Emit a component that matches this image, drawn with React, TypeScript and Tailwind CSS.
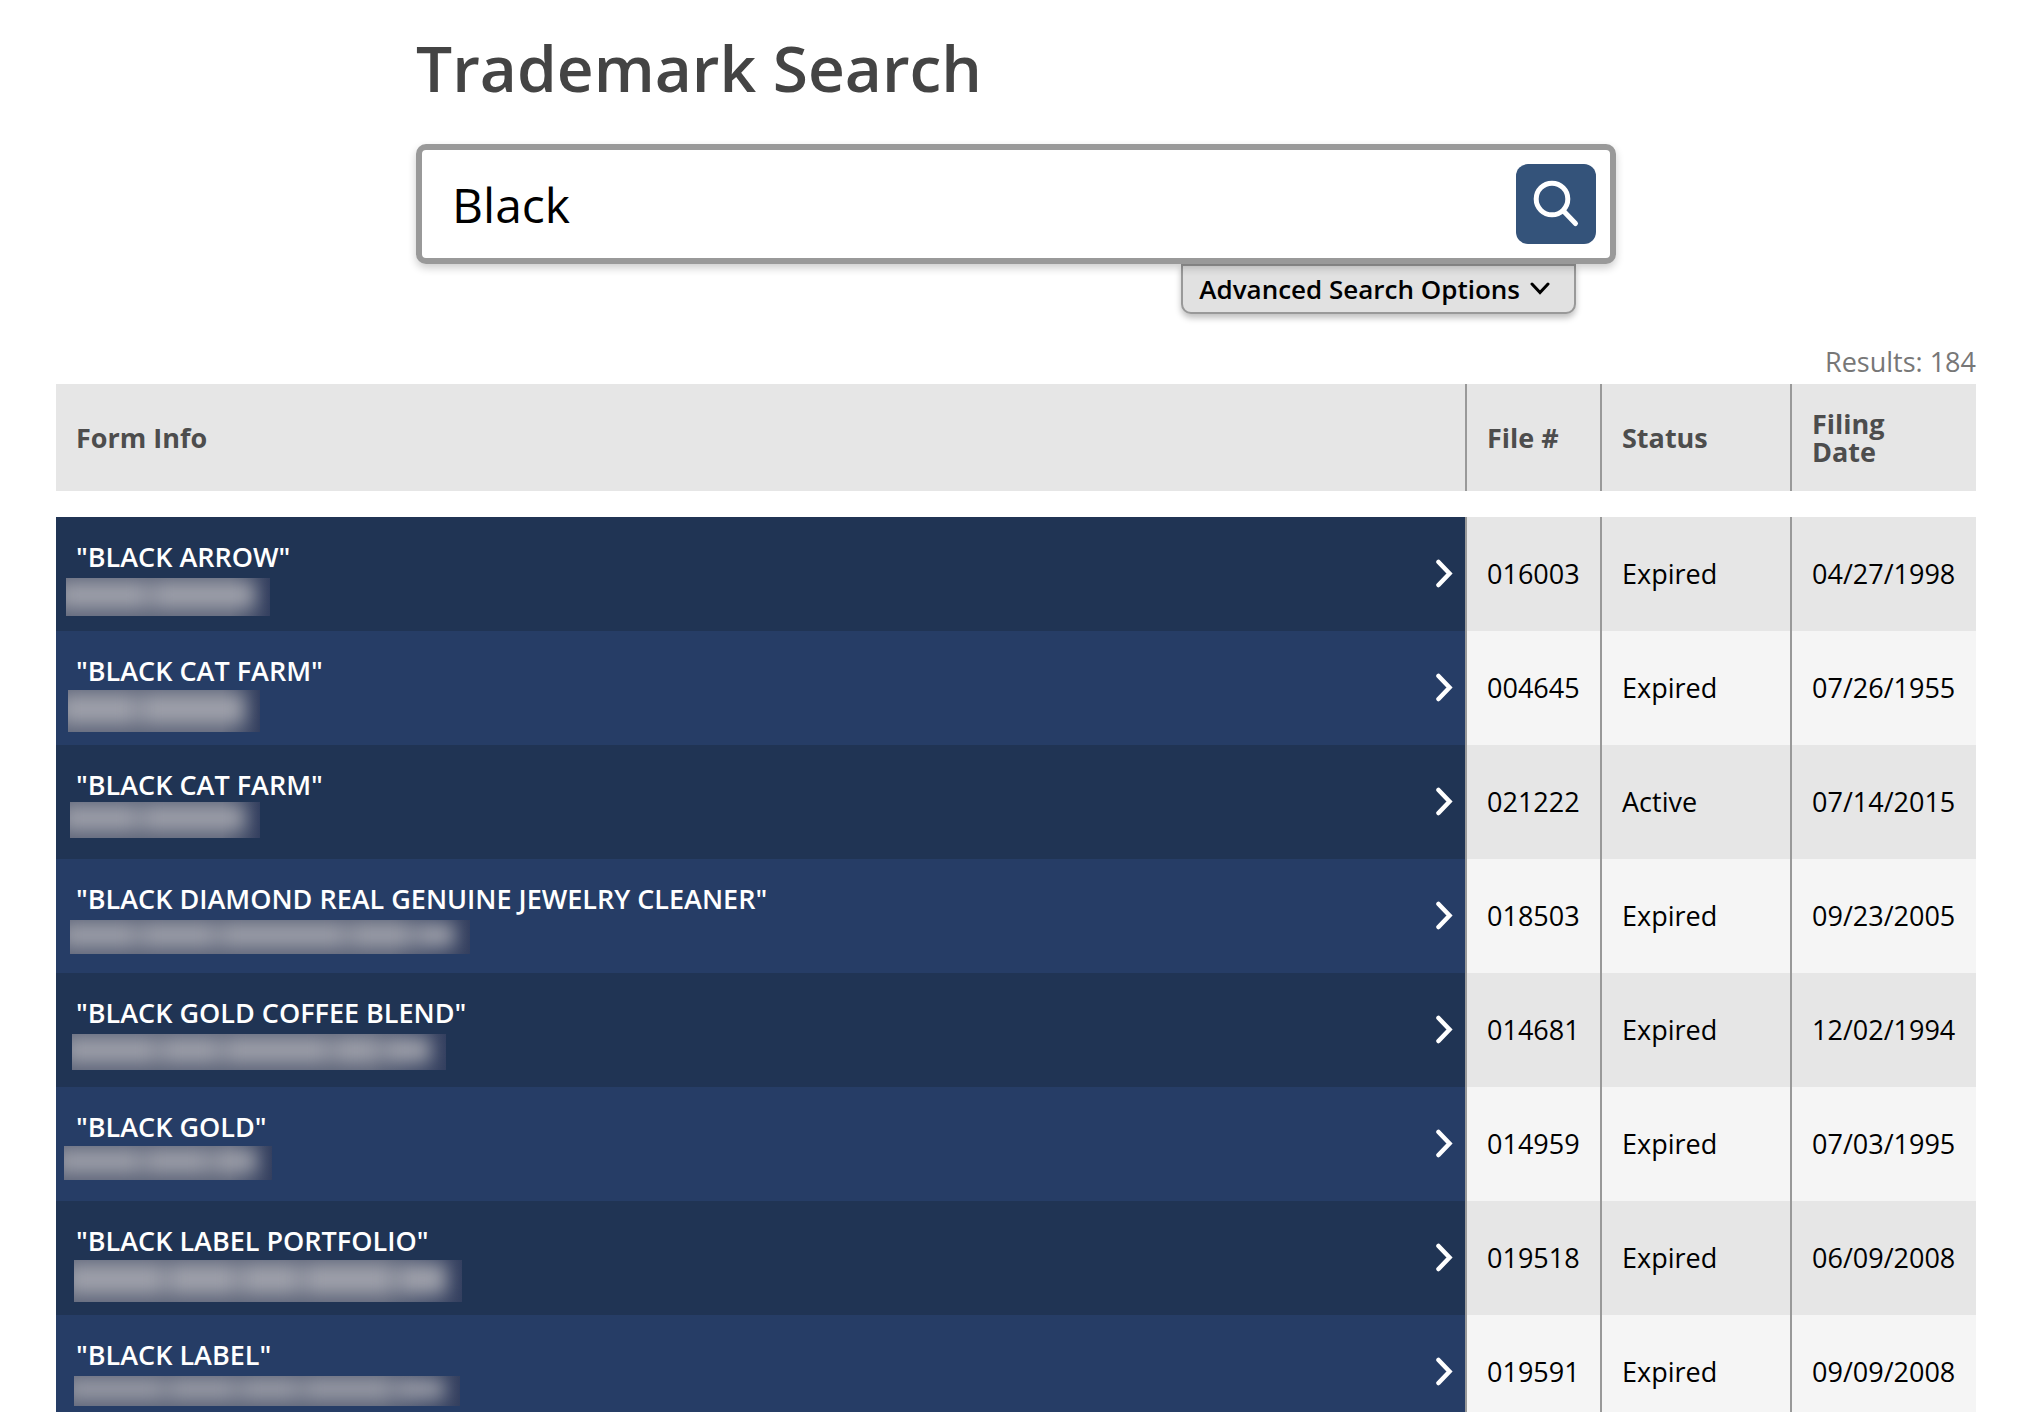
type Trademark = {
  name: string;
  file: string;
  status: string;
  date: string;
  // placement of the blurred owner line inside the cell
  mask: string;
  // relative widths of the blurred words
  words: number[];
};

const trademarks: Trademark[] = [
  { name: "BLACK ARROW", file: "016003", status: "Expired", date: "04/27/1998", mask: "left-[10px] top-[61px] w-[204px] h-[38px]", words: [8, 9] },
  { name: "BLACK CAT FARM", file: "004645", status: "Expired", date: "07/26/1955", mask: "left-[12px] top-[59px] w-[192px] h-[42px]", words: [6, 8] },
  { name: "BLACK CAT FARM", file: "021222", status: "Active", date: "07/14/2015", mask: "left-[14px] top-[57px] w-[190px] h-[36px]", words: [6, 8] },
  { name: "BLACK DIAMOND REAL GENUINE JEWELRY CLEANER", file: "018503", status: "Expired", date: "09/23/2005", mask: "left-[14px] top-[61px] w-[400px] h-[34px]", words: [6, 6, 10, 5, 3] },
  { name: "BLACK GOLD COFFEE BLEND", file: "014681", status: "Expired", date: "12/02/1994", mask: "left-[16px] top-[61px] w-[374px] h-[36px]", words: [8, 5, 9, 4, 4] },
  { name: "BLACK GOLD", file: "014959", status: "Expired", date: "07/03/1995", mask: "left-[8px] top-[59px] w-[208px] h-[34px]", words: [8, 6, 4] },
  { name: "BLACK LABEL PORTFOLIO", file: "019518", status: "Expired", date: "06/09/2008", mask: "left-[18px] top-[59px] w-[388px] h-[42px]", words: [10, 7, 6, 9, 5] },
  { name: "BLACK LABEL", file: "019591", status: "Expired", date: "09/09/2008", mask: "left-[18px] top-[61px] w-[386px] h-[30px]", words: [10, 7, 6, 9, 5] },
];

function SearchIcon() {
  return (
    <svg viewBox="0 0 80 80" className="size-full" fill="none" stroke="white" strokeWidth="5" strokeLinecap="round" aria-hidden="true">
      <circle cx="36" cy="35" r="15.8" />
      <path d="M48 47.5 59.5 59.5" />
    </svg>
  );
}

function OwnerMask({ mask, words }: { mask: string; words: number[] }) {
  return (
    <div className={`absolute overflow-hidden bg-linear-to-r from-[#5f667a] from-80% to-[#333f5f] ${mask}`} aria-hidden="true">
      <div className="-ml-2 flex h-full gap-1 pr-4 pt-1 pb-2 blur-[9px]">
        {words.map((size, i) => (
          <span key={i} className="bg-[#9fa1ab]" style={{ flexGrow: size }} />
        ))}
      </div>
    </div>
  );
}

function Row({ item }: { item: Trademark }) {
  return (
    <tr className="group bg-[#e6e6e6] even:bg-[#f5f5f5]">
      <td className="bg-[#203454] p-0 group-even:bg-[#263d66]">
        <a href="#" className="relative flex h-[114px] items-center justify-between pl-5 pr-3 text-white">
          <span className="pb-[34px] font-semibold leading-9">"{item.name}"</span>
          <OwnerMask mask={item.mask} words={item.words} />
          <svg viewBox="0 0 18 30" className="h-[30px] w-[18px]" fill="none" stroke="currentColor" strokeWidth="4.5" strokeLinecap="round" aria-hidden="true">
            <path d="M3.5 3 14.5 14.5 3.5 26" />
          </svg>
        </a>
      </td>
      <td className="border-l-2 border-[#999] px-5">{item.file}</td>
      <td className="border-l-2 border-[#999] px-5">{item.status}</td>
      <td className="border-l-2 border-[#999] px-5">{item.date}</td>
    </tr>
  );
}

export default function App() {
  return (
    <main className="bg-white px-12 pl-14 font-['Open_Sans','Noto_Sans',sans-serif] text-[27px] text-black">
      <div className="mx-auto flex max-w-[1200px] flex-col">
        <h1 className="pt-[22px] text-[64px] font-semibold leading-[92px] text-[#444]">Trademark Search</h1>
        <form className="mt-[30px] flex flex-col" onSubmit={(e) => e.preventDefault()}>
          <div className="relative z-10 flex h-[120px] items-center rounded-[10px] border-6 border-[#999] bg-white pl-[30px] pr-[14px] shadow-[0_4px_8px_rgba(0,0,0,0.2)]">
            <input aria-label="Search trademarks" defaultValue="Black" className="min-w-0 flex-1 pt-0.5 text-[48px] outline-none" />
            <button type="submit" aria-label="Search" className="size-20 rounded-xl bg-[#34537a]">
              <SearchIcon />
            </button>
          </div>
          <button type="button" className="mr-10 flex h-[50px] items-center gap-[10px] self-end rounded-b-[10px] border-2 border-[#999] bg-[#e1e1e1] pl-4 pr-6 text-[26px] font-semibold shadow-[0_4px_6px_rgba(0,0,0,0.25)]">
            Advanced Search Options
            <svg viewBox="0 0 20 14" className="h-[14px] w-5" fill="none" stroke="currentColor" strokeWidth="3" strokeLinecap="round" aria-hidden="true">
              <path d="M2 2 10 10.5 18 2" />
            </svg>
          </button>
        </form>
      </div>

      <p className="mt-7 pb-0.5 text-right leading-10 text-[#777]">Results: 184</p>
      <table className="w-full border-separate border-spacing-0">
        <thead className="bg-[#e6e6e6] text-left leading-7 text-[#4d4d4d]">
          <tr className="h-[107px]">
            <th className="px-5">Form Info</th>
            <th className="w-[135px] border-l-2 border-[#999] px-5">File #</th>
            <th className="w-[190px] border-l-2 border-[#999] px-5">Status</th>
            <th className="w-[186px] border-l-2 border-[#999] px-5">
              Filing
              <br />
              Date
            </th>
          </tr>
        </thead>
        <tbody aria-hidden="true">
          <tr>
            <td colSpan={4} className="h-[26px] p-0" />
          </tr>
        </tbody>
        <tbody>
          {trademarks.map((item) => (
            <Row key={item.file} item={item} />
          ))}
        </tbody>
      </table>
    </main>
  );
}
